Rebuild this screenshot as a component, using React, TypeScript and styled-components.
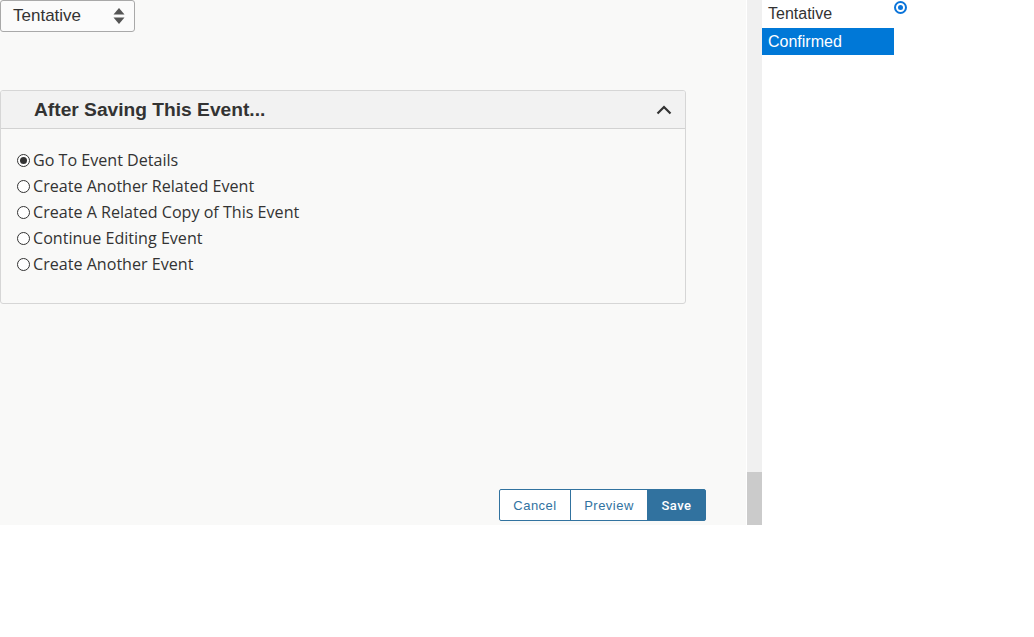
import React from "react";
import styled, { createGlobalStyle } from "styled-components";

const Global = createGlobalStyle`
  html, body { margin: 0; padding: 0; background: #ffffff; }
  #root { width: 1034px; }
`;

const Page = styled.div`
  display: flex;
  align-items: flex-start;
  width: 1034px;
`;

const Main = styled.div`
  width: 746px;
  height: 525px;
  background: #f9f9f8;
  display: flex;
  flex-direction: column;
  box-sizing: border-box;
  padding: 0 40px 4px 0;
  margin-right: 1px;
`;

const SelectBox = styled.div`
  width: 135px;
  height: 32px;
  box-sizing: border-box;
  border: 1px solid #a9a9a9;
  border-radius: 3px;
  background: #fbfbfb;
  display: flex;
  align-items: center;
  justify-content: space-between;
  padding: 0 9px 0 12px;
  font-family: "Liberation Sans", Arial, sans-serif;
  font-size: 17px;
  color: #333;
`;

const Panel = styled.div`
  margin-top: 58px;
  width: 686px;
  height: 214px;
  box-sizing: border-box;
  border: 1px solid #d6d6d6;
  border-radius: 3px;
  background: #f9f9f8;
  display: flex;
  flex-direction: column;
  overflow: hidden;
`;

const PanelHeader = styled.div`
  height: 38px;
  box-sizing: border-box;
  background: #f2f2f2;
  border-bottom: 1px solid #d2d2d2;
  display: flex;
  align-items: center;
  justify-content: space-between;
  padding: 0 13px 0 33px;
`;

const Title = styled.h2`
  margin: 0;
  font-family: "Liberation Sans", Arial, sans-serif;
  font-weight: 700;
  font-size: 19.2px;
  color: #333;
`;

const Options = styled.div`
  display: flex;
  flex-direction: column;
  padding: 18px 0 0 16px;
`;

const Option = styled.label`
  display: flex;
  align-items: center;
  height: 26px;
  font-family: "Open Sans", "Noto Sans", sans-serif;
  font-size: 16.1px;
  color: #333;
  gap: 3px;
`;

const Radio = styled.span<{ $checked?: boolean }>`
  width: 13px;
  height: 13px;
  box-sizing: border-box;
  border: 1px solid #333;
  border-radius: 50%;
  display: flex;
  align-items: center;
  justify-content: center;
  background: #fff;
  &::after {
    content: "";
    display: ${(p) => (p.$checked ? "block" : "none")};
    width: 7px;
    height: 7px;
    border-radius: 50%;
    background: #333;
  }
`;

const Spacer = styled.div`
  flex: 1;
`;

const Footer = styled.div`
  display: flex;
  justify-content: flex-end;
`;

const Btn = styled.button<{ $primary?: boolean; $w: number }>`
  width: ${(p) => p.$w}px;
  height: 32px;
  box-sizing: border-box;
  border: 1px solid #31729f;
  margin-left: -1px;
  background: ${(p) => (p.$primary ? "#31729f" : "#ffffff")};
  color: ${(p) => (p.$primary ? "#ffffff" : "#31729f")};
  font-family: ${(p) => (p.$primary ? "Roboto" : "\"Liberation Sans\"")}, Arial, sans-serif;
  font-size: 13px;
  letter-spacing: 0.5px;
  font-weight: ${(p) => (p.$primary ? 500 : 400)};
  padding: 0;
  &:first-child { border-radius: 2px 0 0 2px; }
  &:last-child { border-radius: 0 2px 2px 0; }
`;

const Scrollbar = styled.div`
  width: 15px;
  height: 525px;
  background: #f0f0f0;
  display: flex;
  flex-direction: column;
  justify-content: flex-end;
`;

const Thumb = styled.div`
  height: 53px;
  background: #cbcbcb;
`;

const ListBox = styled.div`
  width: 132px;
  display: flex;
  flex-direction: column;
  font-family: "Liberation Sans", Arial, sans-serif;
  font-size: 16px;
`;

const ListItem = styled.div<{ $selected?: boolean }>`
  height: 27px;
  display: flex;
  align-items: center;
  padding-left: 6px;
  background: ${(p) => (p.$selected ? "#0078d7" : "#ffffff")};
  color: ${(p) => (p.$selected ? "#ffffff" : "#333")};
  &:first-child { height: 28px; }
`;

const BlueRadio = styled.span`
  margin-top: 1px;
  width: 13px;
  height: 13px;
  box-sizing: border-box;
  border: 2px solid #0a74da;
  border-radius: 50%;
  display: flex;
  align-items: center;
  justify-content: center;
  &::after {
    content: "";
    width: 5px;
    height: 5px;
    border-radius: 50%;
    background: #0a74da;
  }
`;

const Arrows = () => (
  <svg width="12" height="18" viewBox="0 0 12 18">
    <path d="M6 1 L11.5 7.5 H0.5 Z" fill="#555" />
    <path d="M6 17 L11.5 10.5 H0.5 Z" fill="#555" />
  </svg>
);

const Chevron = () => (
  <svg width="16" height="10" viewBox="0 0 16 10">
    <path d="M1.5 8.5 L8 2 L14.5 8.5" fill="none" stroke="#333" strokeWidth="2.2" />
  </svg>
);

const options = [
  "Go To Event Details",
  "Create Another Related Event",
  "Create A Related Copy of This Event",
  "Continue Editing Event",
  "Create Another Event",
];

export default function App() {
  return (
    <>
      <Global />
      <Page>
        <Main>
          <SelectBox>
            <span>Tentative</span>
            <Arrows />
          </SelectBox>
          <Panel>
            <PanelHeader>
              <Title>After Saving This Event...</Title>
              <Chevron />
            </PanelHeader>
            <Options>
              {options.map((o, i) => (
                <Option key={o}>
                  <Radio $checked={i === 0} />
                  {o}
                </Option>
              ))}
            </Options>
          </Panel>
          <Spacer />
          <Footer>
            <Btn $w={72}>Cancel</Btn>
            <Btn $w={78}>Preview</Btn>
            <Btn $w={59} $primary>Save</Btn>
          </Footer>
        </Main>
        <Scrollbar>
          <Thumb />
        </Scrollbar>
        <ListBox>
          <ListItem>Tentative</ListItem>
          <ListItem $selected>Confirmed</ListItem>
        </ListBox>
        <BlueRadio />
      </Page>
    </>
  );
}
